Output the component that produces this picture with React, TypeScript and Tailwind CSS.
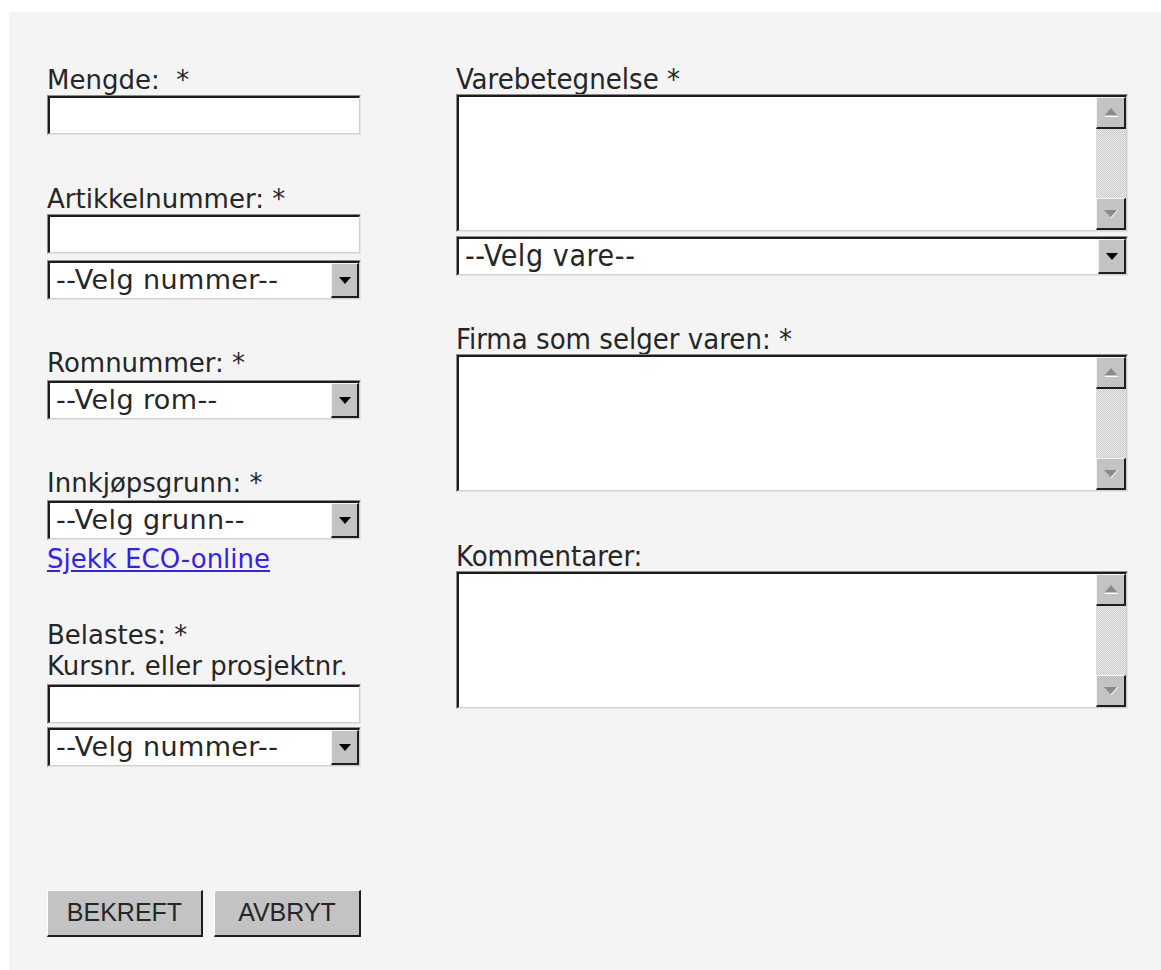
import React from "react";

const leftFont = "font-['DejaVu_Sans',Verdana,sans-serif]";
const rightFont = "font-['DejaVu_Sans',Tahoma,sans-serif] [font-stretch:condensed]";

// sunken 3D frame used by text fields, selects and text areas
function Inset({ className, children }: { className: string; children?: React.ReactNode }) {
    return (
        <div className={`border border-t-[#8c8c8c] border-l-[#8c8c8c] border-b-[#e4e4e4] border-r-[#e4e4e4] ${className}`}>
            <div className="flex h-full border-t-2 border-l-2 border-b border-r border-t-[#1c1c1c] border-l-[#1c1c1c] border-b-[#d0d0d0] border-r-[#d0d0d0] bg-white">
                {children}
            </div>
        </div>
    );
}

function Raised({ className, children }: { className: string; children?: React.ReactNode }) {
    return (
        <div className={`flex items-center justify-center border-t border-l border-b-2 border-r-2 border-t-[#f4f4f4] border-l-[#f4f4f4] border-b-[#1e1e1e] border-r-[#1e1e1e] bg-[#c3c3c3] ${className}`}>
            {children}
        </div>
    );
}

function TextField() {
    return (
        <Inset className="h-[40px] w-full">
            <input type="text" className="h-full w-full bg-white outline-none" />
        </Inset>
    );
}

function Select({ text, font }: { text: string; font: string }) {
    return (
        <Inset className="h-[40px] w-full">
            <div className={`flex-1 pl-[6px] leading-[34px] text-[#262626] whitespace-nowrap overflow-hidden ${font}`}>
                {text}
            </div>
            <Raised className="w-[28px] shrink-0">
                <svg width="12" height="7" viewBox="0 0 12 7">
                    <path d="M0 0h12L6 7z" fill="#000" />
                </svg>
            </Raised>
        </Inset>
    );
}

function TextArea() {
    return (
        <Inset className="h-[138px] w-full">
            <textarea className="flex-1 resize-none overflow-hidden bg-white outline-none" />
            <div className="flex w-[30px] shrink-0 flex-col">
                <Raised className="h-[32px]">
                    <svg width="16" height="11" viewBox="0 0 16 11">
                        <path d="M2 8L8 1l6 7z" fill="#8a8a8a" />
                        <path d="M2 9.5h13" stroke="#fff" strokeWidth="1" />
                    </svg>
                </Raised>
                <div className="flex-1 bg-[repeating-conic-gradient(#c6c6c6_0_25%,#efefef_0_50%)] bg-[length:2px_2px]" />
                <Raised className="h-[32px]">
                    <svg width="16" height="11" viewBox="0 0 16 11">
                        <path d="M1 2h13L7.5 9z" fill="#8a8a8a" />
                        <path d="M8 10l7-8" stroke="#fff" strokeWidth="1" />
                    </svg>
                </Raised>
            </div>
        </Inset>
    );
}

function Label({ children, font, size }: { children: React.ReactNode; font: string; size: string }) {
    return <div className={`text-[#262626] whitespace-nowrap ${font} ${size}`}>{children}</div>;
}

const leftLabel = "text-[26px] leading-[30px]";
const rightLabel = "text-[29px] leading-[30px]";
const leftSelect = `${leftFont} text-[27px] tracking-[0.4px]`;
const rightSelect = `${rightFont} text-[30px] tracking-[0.6px]`;

function App() {
    return (
        <div className="min-h-[970px] bg-white pt-[12px] pl-[9px]">
            <div className="flex h-[958px] bg-[#f4f4f4] pt-[53px] pl-[38px]">
                {/* left column */}
                <div className="flex w-[314px] flex-col">
                    <Label font={leftFont} size={leftLabel}>Mengde:&nbsp; *</Label>
                    <TextField />

                    <div className="mt-[49px]">
                        <Label font={leftFont} size={leftLabel}>Artikkelnummer: *</Label>
                    </div>
                    <TextField />
                    <div className="mt-[6px]">
                        <Select text="--Velg nummer--" font={leftSelect} />
                    </div>

                    <div className="mt-[48px] mb-[2px]">
                        <Label font={leftFont} size={leftLabel}>Romnummer: *</Label>
                    </div>
                    <Select text="--Velg rom--" font={leftSelect} />

                    <div className="mt-[48px] mb-[2px]">
                        <Label font={leftFont} size={leftLabel}>Innkjøpsgrunn: *</Label>
                    </div>
                    <Select text="--Velg grunn--" font={leftSelect} />
                    <a href="#" className={`mt-[4px] self-start text-[26px] leading-[30px] text-[#3322ee] underline ${leftFont}`}>
                        Sjekk ECO-online
                    </a>

                    <div className="mt-[46px]">
                        <Label font={leftFont} size={leftLabel}>Belastes: *</Label>
                        <Label font={leftFont} size="text-[26px] leading-[32px]">Kursnr. eller prosjektnr.</Label>
                    </div>
                    <div className="mt-[2px]">
                        <TextField />
                    </div>
                    <div className="mt-[3px]">
                        <Select text="--Velg nummer--" font={leftSelect} />
                    </div>

                    <div className="mt-[123px] flex gap-[11px]">
                        <button className="flex h-[47px] w-[157px] items-center justify-center border-t border-l border-b-2 border-r-2 border-t-white border-l-white border-b-[#1e1e1e] border-r-[#1e1e1e] bg-[#c3c3c3] font-['Liberation_Sans',Arial,sans-serif] text-[25px] text-[#262626]">
                            BEKREFT
                        </button>
                        <button className="flex h-[47px] w-[148px] items-center justify-center border-t border-l border-b-2 border-r-2 border-t-white border-l-white border-b-[#1e1e1e] border-r-[#1e1e1e] bg-[#c3c3c3] font-['Liberation_Sans',Arial,sans-serif] text-[25px] text-[#262626]">
                            AVBRYT
                        </button>
                    </div>
                </div>

                {/* right column */}
                <div className="ml-[95px] flex w-[672px] flex-col">
                    <div className="-mt-[1px]">
                        <Label font={rightFont} size={rightLabel}>Varebetegnelse *</Label>
                    </div>
                    <TextArea />
                    <div className="mt-[4px]">
                        <Select text="--Velg vare--" font={rightSelect} />
                    </div>

                    <div className="mt-[48px]">
                        <Label font={rightFont} size={rightLabel}>Firma som selger varen: *</Label>
                    </div>
                    <TextArea />

                    <div className="mt-[49px]">
                        <Label font={rightFont} size={rightLabel}>Kommentarer:</Label>
                    </div>
                    <TextArea />
                </div>
            </div>
        </div>
    );
}

export default App;
